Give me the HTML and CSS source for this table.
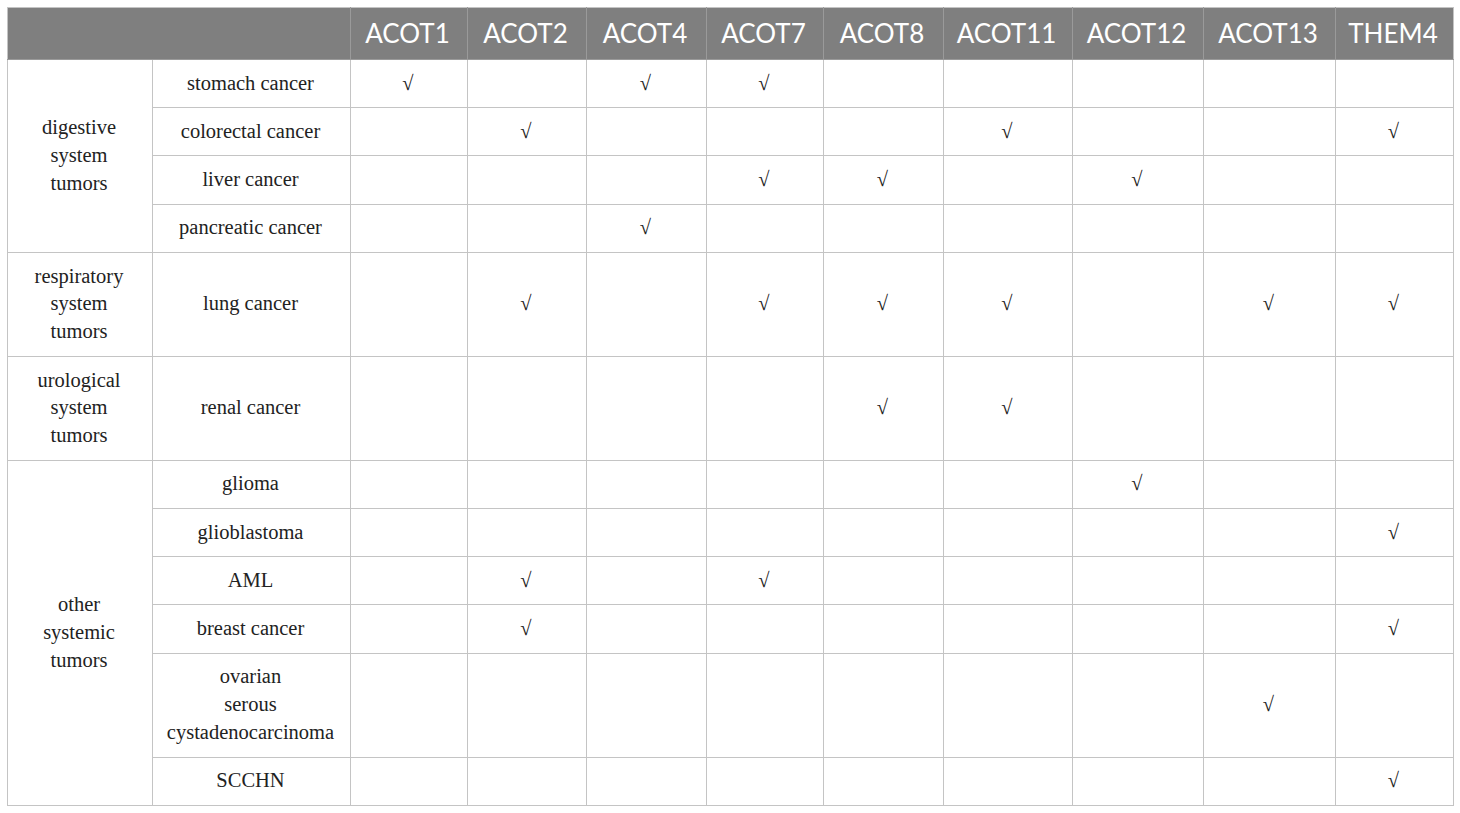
FILE: index.html
```html
<!DOCTYPE html>
<html>
<head>
<meta charset="utf-8">
<link rel="stylesheet" href="styles.css">
</head>
<body>
<div class="wrap">
<table class="grid">
<colgroup>
<col class="c-group"><col class="c-type">
<col class="c1"><col class="c2"><col class="c4"><col class="c7"><col class="c8"><col class="c11"><col class="c12"><col class="c13"><col class="cthem">
</colgroup>
<thead>
<tr class="head">
<th colspan="2"></th>
<th>ACOT1</th><th>ACOT2</th><th>ACOT4</th><th>ACOT7</th><th>ACOT8</th><th>ACOT11</th><th>ACOT12</th><th>ACOT13</th><th>THEM4</th>
</tr>
</thead>
<tbody>
<tr class="r1">
<td rowspan="4" class="grp">digestive<br>system<br>tumors</td>
<td>stomach cancer</td>
<td>√</td><td></td><td>√</td><td>√</td><td></td><td></td><td></td><td></td><td></td>
</tr>
<tr class="r1">
<td>colorectal cancer</td>
<td></td><td>√</td><td></td><td></td><td></td><td>√</td><td></td><td></td><td>√</td>
</tr>
<tr class="r1">
<td>liver cancer</td>
<td></td><td></td><td></td><td>√</td><td>√</td><td></td><td>√</td><td></td><td></td>
</tr>
<tr class="r1">
<td>pancreatic cancer</td>
<td></td><td></td><td>√</td><td></td><td></td><td></td><td></td><td></td><td></td>
</tr>
<tr class="r3">
<td class="grp">respiratory<br>system<br>tumors</td>
<td>lung cancer</td>
<td></td><td>√</td><td></td><td>√</td><td>√</td><td>√</td><td></td><td>√</td><td>√</td>
</tr>
<tr class="r3">
<td class="grp">urological<br>system<br>tumors</td>
<td>renal cancer</td>
<td></td><td></td><td></td><td></td><td>√</td><td>√</td><td></td><td></td><td></td>
</tr>
<tr class="r1">
<td rowspan="6" class="grp">other<br>systemic<br>tumors</td>
<td>glioma</td>
<td></td><td></td><td></td><td></td><td></td><td></td><td>√</td><td></td><td></td>
</tr>
<tr class="r1">
<td>glioblastoma</td>
<td></td><td></td><td></td><td></td><td></td><td></td><td></td><td></td><td>√</td>
</tr>
<tr class="r1">
<td>AML</td>
<td></td><td>√</td><td></td><td>√</td><td></td><td></td><td></td><td></td><td></td>
</tr>
<tr class="r1">
<td>breast cancer</td>
<td></td><td>√</td><td></td><td></td><td></td><td></td><td></td><td></td><td>√</td>
</tr>
<tr class="r3">
<td>ovarian<br>serous<br>cystadenocarcinoma</td>
<td></td><td></td><td></td><td></td><td></td><td></td><td></td><td>√</td><td></td>
</tr>
<tr class="r1">
<td>SCCHN</td>
<td></td><td></td><td></td><td></td><td></td><td></td><td></td><td></td><td>√</td>
</tr>
</tbody>
</table>
</div>
</body>
</html>
```

FILE: styles.css
```css
html, body {
  margin: 0;
  padding: 0;
  background: #ffffff;
}
.wrap {
  padding: 7px 0 0 7px;
}
.grid {
  border-collapse: collapse;
  table-layout: fixed;
  width: 1446px;
  font-family: "Liberation Serif", "Times New Roman", serif;
  font-size: 20.5px;
  color: #222222;
}
.c-group { width: 145px; }
.c-type { width: 198px; }
.c1 { width: 117px; }
.c2 { width: 119px; }
.c4 { width: 120px; }
.c7 { width: 117px; }
.c8 { width: 120px; }
.c11 { width: 129px; }
.c12 { width: 131px; }
.c13 { width: 132px; }
.cthem { width: 118px; }
.grid th, .grid td {
  border: 1px solid #c4c4c4;
  text-align: center;
  vertical-align: middle;
  padding: 0 2px 0 0;
  line-height: 27.7px;
}
.head th {
  background: #7f7f7f;
  color: #ffffff;
  font-family: Lato, "Liberation Sans", sans-serif;
  font-weight: 400;
  font-size: 26px;
  height: 51px;
  padding: 0 3px 0 0;
  border-color: #9a9a9a;
  border-top-color: #c4c4c4;
}
.head th:first-child {
  border-left-color: #c4c4c4;
}
.head th:last-child {
  border-right-color: #c4c4c4;
}
.r1 td { height: 47.2px; }
.r3 td { height: 103px; }
```
